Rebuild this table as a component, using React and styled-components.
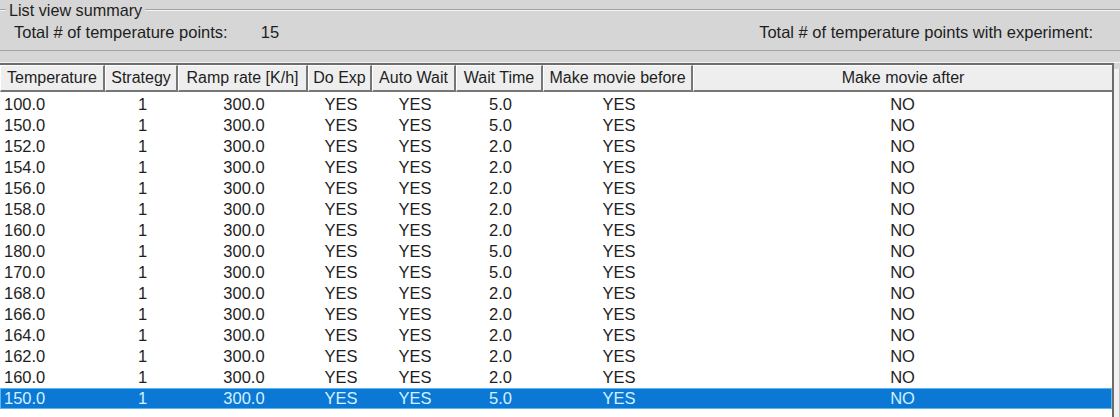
import React from "react";
import styled, { createGlobalStyle } from "styled-components";

const GlobalStyle = createGlobalStyle`
  html, body {
    margin: 0;
    padding: 0;
    background: #d6d6d6;
  }
  body {
    font-family: "Liberation Sans", Arial, sans-serif;
    color: #1e1e1e;
  }
`;

const Page = styled.div`
  width: 1120px;
  height: 417px;
  display: flex;
  flex-direction: column;
  overflow: hidden;
  background: #d6d6d6;
`;

const Summary = styled.div`
  height: 63px;
  display: flex;
  flex-direction: column;
  flex-shrink: 0;
`;

const GroupHeader = styled.div`
  height: 20px;
  display: flex;
  align-items: center;
  gap: 3px;
`;

const Etch = styled.div`
  height: 0;
  border-top: 1px solid #a3a3a3;
  border-bottom: 1px solid #f4f4f4;
  width: ${(p) => (p.$width ? `${p.$width}px` : "auto")};
  flex: ${(p) => (p.$width ? "none" : "1")};
`;

const GroupLabel = styled.span`
  font-size: 16.2px;
  line-height: 20px;
  color: #1e1e1e;
  white-space: nowrap;
`;

const Totals = styled.div`
  height: 25px;
  display: flex;
  align-items: center;
  padding: 0 27px 0 14px;
  font-size: 16.5px;
  white-space: nowrap;
`;

const TotalValue = styled.span`
  margin-left: 33px;
`;

const Spacer = styled.div`
  flex: 1;
`;

const BottomRule = styled(Etch)`
  margin-top: 5px;
`;

const TableArea = styled.div`
  flex: 1;
  display: flex;
`;

const Table = styled.div`
  width: 1112px;
  background: #ffffff;
  border-top: 2px solid #6c6c6c;
  border-right: 2px solid #6c6c6c;
  display: flex;
  flex-direction: column;
`;

const RightStrip = styled.div`
  flex: 1;
  background: #f2f2f2;
  border-right: 1px solid #c4c4c4;
  margin-top: 6px;
`;

const columns = "105px 73px 130px 64px 84px 87px 150px 1fr";

const HeaderRow = styled.div`
  display: grid;
  grid-template-columns: ${columns};
  height: 27px;
`;

const HeaderCell = styled.div`
  background: #eeeeee;
  border-top: 1px solid #ffffff;
  border-left: 1px solid #ffffff;
  border-right: 2px solid #767676;
  border-bottom: 2px solid #767676;
  display: flex;
  align-items: center;
  justify-content: center;
  font-size: 16px;
  white-space: nowrap;
  overflow: hidden;
  &:last-child {
    border-right: none;
  }
`;

const Body = styled.div`
  padding-top: 2px;
  display: flex;
  flex-direction: column;
`;

const Row = styled.div`
  display: grid;
  grid-template-columns: ${columns};
  height: 21px;
  box-sizing: border-box;
  background: ${(p) => (p.$selected ? "#0a78d4" : "transparent")};
  color: ${(p) => (p.$selected ? "#d4f1ff" : "#1e1e1e")};
  border: 1px solid ${(p) => (p.$selected ? "#5cb8ec" : "transparent")};
`;

const Cell = styled.div`
  font-size: 16.5px;
  line-height: 19px;
  text-align: ${(p) => (p.$left ? "left" : "center")};
  padding-left: ${(p) => (p.$left ? "3px" : "0")};
  white-space: nowrap;
`;

const headers = [
  "Temperature",
  "Strategy",
  "Ramp rate [K/h]",
  "Do Exp",
  "Auto Wait",
  "Wait Time",
  "Make movie before",
  "Make movie after",
];

const data = [
  ["100.0", "5.0"],
  ["150.0", "5.0"],
  ["152.0", "2.0"],
  ["154.0", "2.0"],
  ["156.0", "2.0"],
  ["158.0", "2.0"],
  ["160.0", "2.0"],
  ["180.0", "5.0"],
  ["170.0", "5.0"],
  ["168.0", "2.0"],
  ["166.0", "2.0"],
  ["164.0", "2.0"],
  ["162.0", "2.0"],
  ["160.0", "2.0"],
  ["150.0", "5.0"],
];

const App = () => {
  return (
    <Page>
      <GlobalStyle />
      <Summary>
        <GroupHeader>
          <Etch $width={6} />
          <GroupLabel>List view summary</GroupLabel>
          <Etch />
        </GroupHeader>
        <Totals>
          <span>Total # of temperature points:</span>
          <TotalValue>15</TotalValue>
          <Spacer />
          <span>Total # of temperature points with experiment:</span>
        </Totals>
        <BottomRule />
      </Summary>
      <TableArea>
        <Table>
          <HeaderRow>
            {headers.map((h) => (
              <HeaderCell key={h}>{h}</HeaderCell>
            ))}
          </HeaderRow>
          <Body>
            {data.map(([temp, wait], i) => (
              <Row key={i} $selected={i === data.length - 1}>
                <Cell $left>{temp}</Cell>
                <Cell>1</Cell>
                <Cell>300.0</Cell>
                <Cell>YES</Cell>
                <Cell>YES</Cell>
                <Cell>{wait}</Cell>
                <Cell>YES</Cell>
                <Cell>NO</Cell>
              </Row>
            ))}
          </Body>
        </Table>
        <RightStrip />
      </TableArea>
    </Page>
  );
};

export default App;
